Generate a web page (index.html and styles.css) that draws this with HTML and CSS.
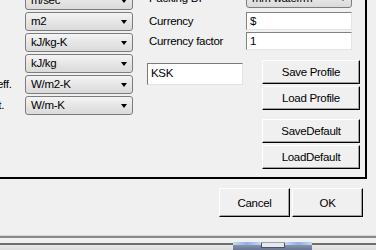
FILE: index.html
```html
<!DOCTYPE html>
<html lang="en">
<head>
  <meta charset="UTF-8" />
  <title>Options</title>
  <link rel="stylesheet" href="styles.css">
</head>
<body>
  <div class="dialog">
    <div class="panel">
      <div class="units">
        <span class="label">Velocity</span>
        <div class="combo">m/sec<span class="arrow"></span></div>
        <span class="label">Area</span>
        <div class="combo">m2<span class="arrow"></span></div>
        <span class="label">Specific heat</span>
        <div class="combo">kJ/kg-K<span class="arrow"></span></div>
        <span class="label">Latent heat</span>
        <div class="combo">kJ/kg<span class="arrow"></span></div>
        <span class="label">Heat transfer coeff.</span>
        <div class="combo">W/m2-K<span class="arrow"></span></div>
        <span class="label">Thermal conduct.</span>
        <div class="combo">W/m-K<span class="arrow"></span></div>
      </div>

      <div class="settings">
        <div class="fields">
          <span class="label top">Packing DP</span>
          <div class="combo">mm water/m<span class="arrow"></span></div>
          <span class="label">Currency</span>
          <div class="field">$</div>
          <span class="label">Currency factor</span>
          <div class="field">1</div>
        </div>

        <div class="profile">
          <div class="field name">KSK</div>
          <div class="buttons">
            <button class="btn">Save Profile</button>
            <button class="btn">Load Profile</button>
            <button class="btn spaced">SaveDefault</button>
            <button class="btn">LoadDefault</button>
          </div>
        </div>
      </div>
    </div>

    <div class="actions">
      <button class="btn big">Cancel</button>
      <button class="btn big">OK</button>
    </div>
  </div>

  <div class="footer">
    <div class="edge"></div>
    <div class="taskbar">
      <div class="task-item">
        <span class="glow"></span>
        <span class="notch"></span>
        <span class="glow"></span>
      </div>
    </div>
  </div>
</body>
</html>
```

FILE: styles.css
```css
body {
  margin: 0;
  width: 376px;
  height: 250px;
  overflow: hidden;
  background: #f0f0f0;
  font-family: "Liberation Sans", Arial, sans-serif;
  font-size: 11.5px;
  letter-spacing: -0.3px;
  color: #000;
}

.panel {
  display: flex;
  margin-top: -11px;
  margin-left: -110px;
  width: 475px;
  height: 188px;
  border-right: 2px solid #000;
  border-bottom: 2px solid #000;
}

/* left column of unit pickers */
.units {
  display: grid;
  grid-template-columns: 135px 108px;
  grid-auto-rows: 19px;
  row-gap: 2px;
  padding-top: 2px;
}
.units .label {
  padding-left: 30px;
  white-space: nowrap;
  line-height: 19px;
}

.combo {
  position: relative;
  box-sizing: border-box;
  height: 19px;
  padding-left: 5px;
  line-height: 17px;
  border: 1px solid #7c7c7c;
  border-radius: 3px;
  background: linear-gradient(#f4f4f4, #e6e6e6 50%, #dadada);
  white-space: nowrap;
}
.arrow {
  position: absolute;
  right: 5px;
  top: 7px;
  width: 0;
  height: 0;
  border-left: 3.5px solid transparent;
  border-right: 3.5px solid transparent;
  border-top: 4px solid #000;
}

/* right side */
.settings {
  margin-left: 14px;
}
.fields {
  display: grid;
  grid-template-columns: 99px 106px;
  grid-template-rows: 21px 20px 20px;
}
.fields .label {
  padding-left: 2px;
  padding-top: 2px;
  line-height: 18px;
  white-space: nowrap;
}
.fields .label.top {
  padding-top: 0;
}
.fields .field {
  align-self: end;
}

.field {
  box-sizing: border-box;
  height: 18px;
  padding-left: 3px;
  line-height: 16px;
  background: #fff;
  border: 1px solid;
  border-color: #828282 #e4e4e4 #e4e4e4 #828282;
}

.profile {
  display: flex;
  margin-top: 10px;
}
.field.name {
  width: 96px;
  height: 22px;
  margin-top: 3px;
  line-height: 18px;
  border-color: #7a7a7a #e2e2e2 #e2e2e2 #7a7a7a;
}
.buttons {
  display: flex;
  flex-direction: column;
  gap: 2px;
  margin-left: 19px;
}

.btn {
  box-sizing: border-box;
  width: 98px;
  height: 24px;
  padding: 0;
  font: inherit;
  letter-spacing: inherit;
  color: #000;
  background: #f0f0f0;
  border: 1px solid;
  border-color: #fff #000 #000 #fff;
  box-shadow: inset -1px -1px #a0a0a0;
}
.btn.spaced {
  margin-top: 7px;
}

.actions {
  display: flex;
  justify-content: flex-end;
  gap: 2px;
  margin-top: 9px;
  padding-right: 13px;
}
.btn.big {
  width: 71px;
  height: 29px;
}

/* bottom edge of the window and the taskbar under it */
.footer {
  margin-top: 18px;
  border-top: 1px solid #d6d6d6;
}
.edge {
  height: 5px;
  border-top: 2px solid #888;
}
.taskbar {
  height: 10px;
  padding-left: 233px;
  border-top: 2px solid #6e6e6e;
  background: linear-gradient(#e8e8e8, #d4d4d4);
}
.task-item {
  display: flex;
  width: 79px;
  height: 10px;
  margin-top: -3px;
  background: linear-gradient(#9aa6bd, #5c6a84);
  border-radius: 0 0 2px 2px;
}
.glow {
  flex: 1;
  height: 3px;
  background: linear-gradient(90deg, #c8d6f0, #8fb0e8, #c8d6f0);
}
.notch {
  width: 22px;
  height: 4px;
  margin-top: 1px;
  background: #e8e8e8;
  border: 1px solid #4c5568;
  border-top: none;
}
```
